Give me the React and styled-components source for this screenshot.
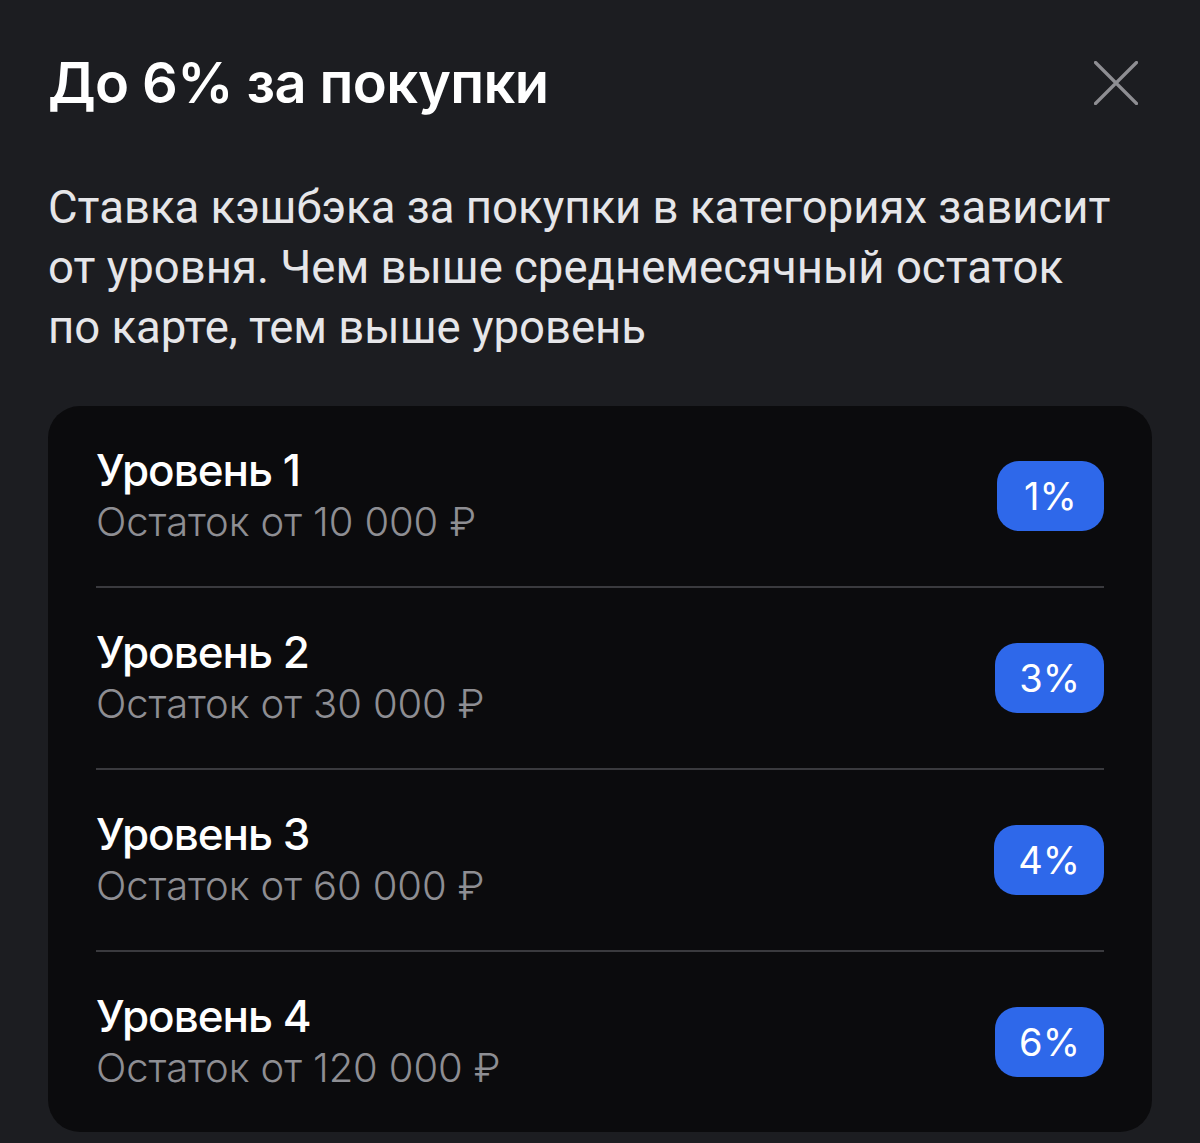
import React from "react";
import styled, { createGlobalStyle } from "styled-components";

const Global = createGlobalStyle`
  html, body { margin: 0; padding: 0; background: #1c1d21; }
  body { font-family: Inter, "Noto Sans", sans-serif; -webkit-font-smoothing: antialiased; }
`;

const Page = styled.div`
  width: 1200px;
  height: 1143px;
  box-sizing: border-box;
  padding: 48px 48px 0;
  background: #1c1d21;
  overflow: hidden;
`;

const Header = styled.div`
  display: flex;
  align-items: center;
  justify-content: space-between;
`;

const Title = styled.h1`
  margin: 0;
  font-family: Inter, sans-serif;
  font-size: 56px;
  line-height: 70px;
  font-weight: 600;
  letter-spacing: -0.6px;
  color: #ffffff;
`;

const CloseButton = styled.button`
  width: 44px;
  height: 44px;
  margin-right: 14px;
  padding: 0;
  border: 0;
  background: transparent;
  display: flex;
  align-items: center;
  justify-content: center;
  cursor: pointer;
`;

const Description = styled.p`
  margin: 60px 0 0;
  max-width: 1075px;
  font-family: Roboto, sans-serif;
  font-size: 45.5px;
  line-height: 60px;
  font-weight: 400;
  color: #e6e6e9;
`;

const Card = styled.div`
  margin-top: 48px;
  background: #0b0b0d;
  border-radius: 32px;
  padding: 0 48px;
`;

const Row = styled.div`
  display: flex;
  align-items: center;
  justify-content: space-between;
  padding: 38px 0;
  border-top: ${(p) => (p.$first ? "none" : "2px solid #3a3a3e")};
`;

const Texts = styled.div`
  display: flex;
  flex-direction: column;
`;

const Level = styled.div`
  font-family: Inter, sans-serif;
  font-size: 44px;
  line-height: 52px;
  font-weight: 500;
  letter-spacing: -1px;
  color: #ffffff;
`;

const Balance = styled.div`
  font-family: Inter, sans-serif;
  font-size: 40px;
  line-height: 52px;
  font-weight: 300;
  letter-spacing: -0.1px;
  color: #8e8e93;
`;

const Badge = styled.div`
  height: 70px;
  min-width: 107px;
  box-sizing: border-box;
  padding: 0 24px;
  border-radius: 22px;
  background: #2e68ea;
  color: #ffffff;
  font-family: Inter, sans-serif;
  font-size: 38px;
  font-weight: 400;
  display: flex;
  align-items: center;
  justify-content: center;
`;

const levels = [
  { name: "Уровень 1", balance: "Остаток от 10 000 ₽", rate: "1%" },
  { name: "Уровень 2", balance: "Остаток от 30 000 ₽", rate: "3%" },
  { name: "Уровень 3", balance: "Остаток от 60 000 ₽", rate: "4%" },
  { name: "Уровень 4", balance: "Остаток от 120 000 ₽", rate: "6%" },
];

export default function App() {
  return (
    <Page>
      <Global />
      <Header>
        <Title>До 6% за покупки</Title>
        <CloseButton aria-label="Закрыть">
          <svg width="44" height="44" viewBox="0 0 44 44" fill="none">
            <path d="M1.5 1.5L42.5 42.5M42.5 1.5L1.5 42.5" stroke="#8e8e93" strokeWidth="3.2" strokeLinecap="round" />
          </svg>
        </CloseButton>
      </Header>
      <Description>
        Ставка кэшбэка за покупки в категориях зависит от уровня. Чем выше
        среднемесячный остаток по карте, тем выше уровень
      </Description>
      <Card>
        {levels.map((l, i) => (
          <Row key={l.name} $first={i === 0}>
            <Texts>
              <Level>{l.name}</Level>
              <Balance>{l.balance}</Balance>
            </Texts>
            <Badge>{l.rate}</Badge>
          </Row>
        ))}
      </Card>
    </Page>
  );
}
